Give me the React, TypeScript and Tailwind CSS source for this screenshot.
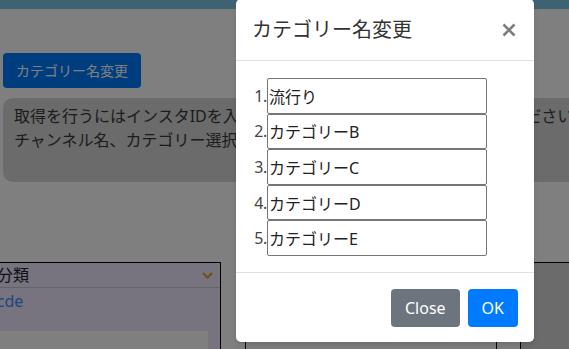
import React from 'react';

const categories = ['流行り', 'カテゴリーB', 'カテゴリーC', 'カテゴリーD', 'カテゴリーE'];

const font = { fontFamily: '"Noto Sans", "Noto Sans CJK JP", sans-serif' };

const App: React.FC = () => {
  return (
    <div className="relative w-[569px] h-[349px] overflow-hidden bg-white text-[#212529]" style={font}>
      {/* ページ本体 */}
      <div className="h-[9px] bg-[#7ec4e4]" />
      <div className="px-[3px] pt-[44px]">
        <button className="h-[35px] px-[13px] rounded-[4px] bg-[#007bff] text-white text-[14px] leading-[35px]">
          カテゴリー名変更
        </button>
        <div className="mt-[10px] h-[84px] w-[600px] rounded-[10px] bg-[#d6d6d6] pl-[11px] pt-[6px] text-[16px] leading-[24px] text-[#383838] whitespace-nowrap">
          <p>取得を行うにはインスタIDを入力して「取得」ボタンをクリックしてください</p>
          <p>チャンネル名、カテゴリー選択後に保存してください</p>
        </div>
      </div>

      <div className="mt-[80px] flex">
        {/* 左テーブル */}
        <div className="ml-[-30px] w-[251px] h-[100px] border border-black bg-[#eee6fe]">
          <div className="h-[25px] flex items-center justify-between border-b border-[#c8c8c8] pl-[10px] pr-[7px] text-[16px]">
            <span>大分類</span>
            <svg width="11" height="7" viewBox="0 0 11 7">
              <path d="M1 1l4.5 4.5L10 1" fill="none" stroke="#e0a020" strokeWidth="2" />
            </svg>
          </div>
          <div className="h-[43px] pl-[7px] pt-[1px] text-[16px] leading-[24px] text-[#3f8cff]">abcde</div>
          <div className="ml-[2px] w-[235px] h-[30px] bg-white" />
        </div>

        {/* 右テーブル */}
        <div className="ml-[24px] flex-1 h-[100px] flex border-t border-l border-black">
          <div className="w-[250px] bg-white" />
          <div className="w-[24px] border-l border-black bg-white" />
          <div className="flex-1 border-l border-black bg-[#d6d6d6]" />
        </div>
      </div>

      {/* 背景オーバーレイ */}
      <div className="absolute inset-0 bg-black/50" />

      {/* モーダル */}
      <div className="absolute left-[236px] top-[-1px] w-[298px] rounded-[5px] bg-white shadow-md">
        <div className="h-[62px] flex items-center justify-between border-b border-[#dee2e6] px-4">
          <h5 className="text-[20px] leading-[30px] text-[#333]">カテゴリー名変更</h5>
          <svg width="14" height="14" viewBox="0 0 14 14" className="mr-[2px]">
            <path d="M1.5 1.5l11 11M12.5 1.5l-11 11" stroke="#7d7d7d" strokeWidth="2.6" />
          </svg>
        </div>

        <div className="px-4 pt-[17px] pb-4">
          {categories.map((name, i) => (
            <div key={i} className="flex items-center h-[35.6px]">
              <span className="w-[15px] text-right text-[16px] tracking-[-0.3px] text-[#444]">{i + 1}.</span>
              <input
                defaultValue={name}
                className="w-[220px] h-[35.6px] border border-[#767676] rounded-[2px] px-[1px] text-[16px] text-[#222] outline-none"
                style={font}
              />
            </div>
          ))}
        </div>

        <div className="flex justify-end gap-2 border-t border-[#dee2e6] px-4 pt-4 pb-[15px]">
          <button className="h-[38px] px-[14px] rounded-[4px] bg-[#6c757d] text-white text-[16px]">Close</button>
          <button className="h-[38px] px-[14px] rounded-[4px] bg-[#007bff] text-white text-[16px]">OK</button>
        </div>
      </div>
    </div>
  );
};

export default App;
